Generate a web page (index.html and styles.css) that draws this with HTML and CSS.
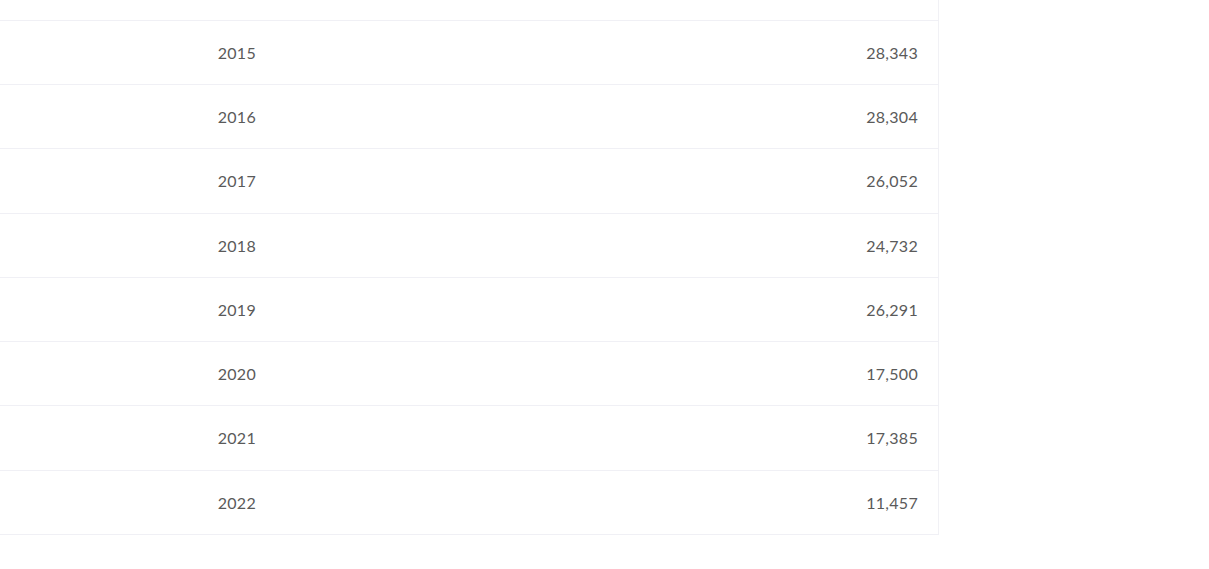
FILE: index.html
```html
<!DOCTYPE html>
<html>
<head>
<meta charset="utf-8">
<link rel="stylesheet" href="styles.css">
</head>
<body>
<div class="wrap">
<table class="data">
<tbody>
<tr><td class="year"></td><td class="val"></td></tr>
<tr><td class="year">2015</td><td class="val">28,343</td></tr>
<tr><td class="year">2016</td><td class="val">28,304</td></tr>
<tr><td class="year">2017</td><td class="val">26,052</td></tr>
<tr><td class="year">2018</td><td class="val">24,732</td></tr>
<tr><td class="year">2019</td><td class="val">26,291</td></tr>
<tr><td class="year">2020</td><td class="val">17,500</td></tr>
<tr><td class="year">2021</td><td class="val">17,385</td></tr>
<tr><td class="year">2022</td><td class="val">11,457</td></tr>
</tbody>
</table>
</div>
</body>
</html>
```
FILE: styles.css
```css
html, body {
  margin: 0;
  padding: 0;
  background: #fff;
}
.wrap {
  width: 939px;
  margin-top: -44px;
}
.data {
  width: 939px;
  border-collapse: collapse;
  font-family: "Lato", "Open Sans", sans-serif;
  font-size: 16px;
  color: #5a5a5a;
  border-right: 1px solid #f1f1f5;
}
.data tr {
  height: 64.25px;
  border-bottom: 1px solid #f0f0f5;
}
.data td {
  padding: 0 20px;
  text-align: right;
  vertical-align: middle;
  letter-spacing: 0.3px;
}
.data .year {
  width: 236px;
}
```
